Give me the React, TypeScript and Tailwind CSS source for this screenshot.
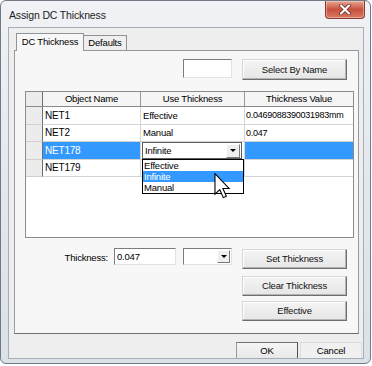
import React from "react";

const F = "font-['Liberation_Sans',Arial,sans-serif]";

function Btn({ children, className = "" }: { children: React.ReactNode; className?: string }) {
  return (
    <div
      className={`flex items-center justify-center border border-t-[#d6d6d6] border-l-[#d6d6d6] border-r-[#6e6e6e] border-b-[#6e6e6e] bg-gradient-to-b from-[#f4f4f4] to-[#e6e6e6] shadow-[inset_-1px_-1px_0_#b4b4b4,inset_1px_1px_0_#ffffff] text-[#111] ${className}`}
    >
      {children}
    </div>
  );
}

function Arrow({ className = "" }: { className?: string }) {
  return (
    <div
      className={`flex items-center justify-center bg-[#efefef] border border-t-[#ffffff] border-l-[#ffffff] border-r-[#7a7a7a] border-b-[#7a7a7a] ${className}`}
    >
      <div className="w-0 h-0 border-l-[3px] border-r-[3px] border-t-[3px] border-l-transparent border-r-transparent border-t-black" />
    </div>
  );
}

function DataRow({
  name,
  use,
  value,
  h,
}: {
  name: string;
  use: string;
  value: string;
  h: string;
}) {
  return (
    <div className={`flex ${h}`}>
      <div className="w-[17px] shrink-0 bg-[#ececec] border-r border-b border-r-[#6e6e6e] border-b-[#d0d0d0]" />
      <div className="w-[98px] shrink-0 border-r border-b border-[#d4d4d4] flex items-center pl-[2px] overflow-hidden text-[10px] tracking-[-0.2px]">
        {name}
      </div>
      <div className="w-[104px] shrink-0 border-r border-b border-[#d4d4d4] flex items-center pl-[2px] overflow-hidden">
        {use}
      </div>
      <div className="w-[108px] shrink-0 border-b border-[#d4d4d4] flex items-center pl-[1px] overflow-hidden text-[9px] tracking-[-0.25px]">
        {value}
      </div>
    </div>
  );
}

export default function App() {
  return (
    <div className={`w-[372px] h-[366px] bg-white relative overflow-hidden ${F} text-[9.5px] tracking-[-0.2px] leading-none text-black whitespace-nowrap`}>
      <div className="w-[371px] h-[364px] flex flex-col border border-[#6f7a86] rounded-[6px] bg-gradient-to-b from-[#f0f2f5] via-[#e4e8ec] to-[#dce1e7] overflow-hidden">
        {/* title bar */}
        <div className="h-[26px] shrink-0 flex items-start justify-between">
          <div className="pl-[8px] pt-[9px] text-[10.5px] tracking-[-0.15px] text-[#1c1c1c]">Assign DC Thickness</div>
          <div className="mr-[5px] w-[40px] h-[18px] rounded-b-[4px] border border-t-0 border-[#8a3a30] bg-gradient-to-b from-[#e7a593] via-[#c9503d] to-[#d9795f] flex items-center justify-center shadow-[inset_0_0_0_1px_rgba(255,255,255,0.35)]">
            <svg width="12" height="11" viewBox="0 0 12 11">
              <path d="M2 1.5 L10 9.5 M10 1.5 L2 9.5" stroke="#5a2218" strokeWidth="3.6" strokeLinecap="round" />
              <path d="M2 1.5 L10 9.5 M10 1.5 L2 9.5" stroke="#ffffff" strokeWidth="2.2" strokeLinecap="round" />
            </svg>
          </div>
        </div>

        {/* client area */}
        <div className="ml-[7px] w-[356px] h-[332px] border border-[#a5adb6] bg-[#eeeeee] flex flex-col">
          <div className="flex flex-col pl-[5px] pr-[4px] pt-[5px]">
            {/* tabs */}
            <div className="h-[17px] flex items-start pl-[2px]">
              <div className="relative z-10 w-[68px] h-[18px] mb-[-1px] bg-[#f7f7f7] border border-b-0 border-[#8f939a] flex items-center justify-center pb-[1px]">
                DC Thickness
              </div>
              <div className="mt-[2px] w-[43px] h-[15px] border-t border-r border-[#8f939a] bg-[#efefef] flex items-center justify-center">
                Defaults
              </div>
            </div>

            {/* tab panel */}
            <div className="h-[284px] border border-[#969aa0] border-b-[#6e6e6e] bg-[#f7f7f7] flex flex-col">
              {/* select by name row */}
              <div className="mt-[8px] flex items-start justify-end pr-[11px] gap-[10px]">
                <div className="w-[49px] h-[19px] bg-white border border-t-[#7c7c7c] border-l-[#7c7c7c] border-r-[#e2e2e2] border-b-[#e2e2e2]" />
                <Btn className="w-[105px] h-[21px]">Select By Name</Btn>
              </div>

              {/* grid */}
              <div className="mt-[11px] ml-[10px] w-[329px] h-[147px] border border-[#8c8c8c] bg-white flex flex-col">
                <div className="flex h-[15px] border-b border-[#8a8a8a]">
                  <div className="w-[17px] shrink-0 bg-[#ececec] border-r border-[#6e6e6e]" />
                  <div className="w-[98px] shrink-0 bg-[#f5f5f5] border-r border-[#9a9a9a] flex items-center justify-center">
                    Object Name
                  </div>
                  <div className="w-[104px] shrink-0 bg-[#f5f5f5] border-r border-[#9a9a9a] flex items-center justify-center">
                    Use Thickness
                  </div>
                  <div className="w-[108px] shrink-0 bg-[#f5f5f5] flex items-center justify-center">
                    Thickness Value
                  </div>
                </div>
                <DataRow name="NET1" use="Effective" value="0.0469088390031983mm" h="h-[18px]" />
                <DataRow name="NET2" use="Manual" value="0.047" h="h-[17px]" />
                {/* selected row */}
                <div className="flex h-[18px] relative z-10">
                  <div className="w-[17px] shrink-0 bg-[#ececec] border-r border-b border-r-[#6e6e6e] border-b-[#d0d0d0]" />
                  <div className="w-[98px] shrink-0 bg-[#3399ff] text-white border-r border-b border-[#d4d4d4] flex items-center pl-[2px] text-[10px]">
                    NET178
                  </div>
                  <div className="w-[104px] shrink-0 border-r border-b border-[#d4d4d4] pl-[1px]">
                    <div className="relative w-[100px] h-[17px] bg-white border border-[#5c5c5c] flex items-center pl-[2px]">
                      <span className="flex-1">Infinite</span>
                      <Arrow className="w-[14px] h-[14px] mr-[1px]" />
                      <div className="absolute left-[-1px] top-[16px] w-[102px] h-[35px] bg-white border border-black flex flex-col">
                        <div className="h-[11px] flex items-center pl-[1px]">Effective</div>
                        <div className="h-[11px] flex items-center pl-[1px] bg-[#3399ff] text-white">Infinite</div>
                        <div className="h-[11px] flex items-center pl-[1px]">Manual</div>
                      </div>
                    </div>
                  </div>
                  <div className="w-[108px] shrink-0 bg-[#3399ff] border-b border-[#d4d4d4]" />
                </div>
                <DataRow name="NET179" use="" value="" h="h-[17px]" />
              </div>

              {/* thickness row */}
              <div className="mt-[11px] flex items-start justify-end pr-[11px]">
                <div className="mt-[4px] mr-[6px]">Thickness:</div>
                <div className="w-[62px] h-[17px] mt-[-1px] bg-white border border-t-[#7c7c7c] border-l-[#7c7c7c] border-r-[#e2e2e2] border-b-[#e2e2e2] flex items-center pl-[2px]">
                  0.047
                </div>
                <div className="ml-[7px] w-[49px] h-[17px] mt-[-1px] bg-white border border-t-[#7c7c7c] border-l-[#7c7c7c] border-r-[#e2e2e2] border-b-[#e2e2e2] flex items-center justify-end pr-[1px]">
                  <Arrow className="w-[13px] h-[13px]" />
                </div>
                <Btn className="ml-[10px] w-[105px] h-[20px]">Set Thickness</Btn>
              </div>
              <div className="mt-[7px] flex justify-end pr-[11px]">
                <Btn className="w-[105px] h-[20px]">Clear Thickness</Btn>
              </div>
              <div className="mt-[5px] flex justify-end pr-[11px]">
                <Btn className="w-[105px] h-[20px]">Effective</Btn>
              </div>
            </div>
          </div>

          {/* bottom buttons */}
          <div className="flex-1 flex items-end justify-end pr-[1px] gap-[2px]">
            <div className="w-[62px] h-[16px] border border-b-0 border-t-[#707070] border-l-[#9a9a9a] border-r-[#505050] bg-gradient-to-b from-[#f6f6f6] to-[#e8e8e8] flex items-center justify-center pt-[1px]">
              OK
            </div>
            <div className="w-[62px] h-[16px] border border-b-0 border-[#dcdcdc] bg-[#f0f0f0] flex items-center justify-center pt-[1px]">
              Cancel
            </div>
          </div>
        </div>
      </div>

      {/* mouse cursor */}
      <svg className="absolute left-[214px] top-[173px] z-20" width="17" height="26" viewBox="0 0 12 19">
        <path
          d="M0.5 0.5 L0.5 15.5 L4 12.2 L6.6 18 L8.8 17 L6.3 11.3 L10.8 11.3 Z"
          fill="#ffffff"
          stroke="#000000"
          strokeWidth="0.8"
          strokeLinejoin="miter"
        />
      </svg>
    </div>
  );
}
